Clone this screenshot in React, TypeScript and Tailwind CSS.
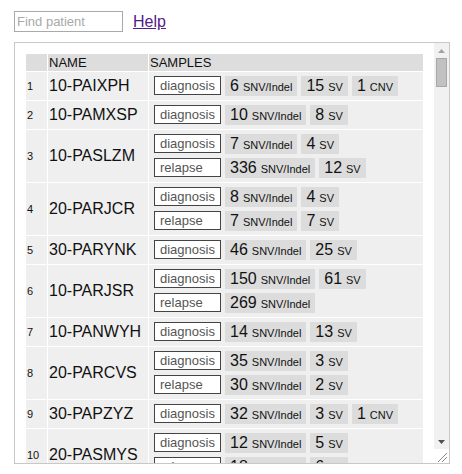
import React from "react";

type Count = { n: number; unit: string };
type Sample = { label: string; counts: Count[] };
type Patient = { name: string; samples: Sample[] };

const patients: Patient[] = [
  { name: "10-PAIXPH", samples: [{ label: "diagnosis", counts: [{ n: 6, unit: "SNV/Indel" }, { n: 15, unit: "SV" }, { n: 1, unit: "CNV" }] }] },
  { name: "10-PAMXSP", samples: [{ label: "diagnosis", counts: [{ n: 10, unit: "SNV/Indel" }, { n: 8, unit: "SV" }] }] },
  {
    name: "10-PASLZM",
    samples: [
      { label: "diagnosis", counts: [{ n: 7, unit: "SNV/Indel" }, { n: 4, unit: "SV" }] },
      { label: "relapse", counts: [{ n: 336, unit: "SNV/Indel" }, { n: 12, unit: "SV" }] },
    ],
  },
  {
    name: "20-PARJCR",
    samples: [
      { label: "diagnosis", counts: [{ n: 8, unit: "SNV/Indel" }, { n: 4, unit: "SV" }] },
      { label: "relapse", counts: [{ n: 7, unit: "SNV/Indel" }, { n: 7, unit: "SV" }] },
    ],
  },
  { name: "30-PARYNK", samples: [{ label: "diagnosis", counts: [{ n: 46, unit: "SNV/Indel" }, { n: 25, unit: "SV" }] }] },
  {
    name: "10-PARJSR",
    samples: [
      { label: "diagnosis", counts: [{ n: 150, unit: "SNV/Indel" }, { n: 61, unit: "SV" }] },
      { label: "relapse", counts: [{ n: 269, unit: "SNV/Indel" }] },
    ],
  },
  { name: "10-PANWYH", samples: [{ label: "diagnosis", counts: [{ n: 14, unit: "SNV/Indel" }, { n: 13, unit: "SV" }] }] },
  {
    name: "20-PARCVS",
    samples: [
      { label: "diagnosis", counts: [{ n: 35, unit: "SNV/Indel" }, { n: 3, unit: "SV" }] },
      { label: "relapse", counts: [{ n: 30, unit: "SNV/Indel" }, { n: 2, unit: "SV" }] },
    ],
  },
  { name: "30-PAPZYZ", samples: [{ label: "diagnosis", counts: [{ n: 32, unit: "SNV/Indel" }, { n: 3, unit: "SV" }, { n: 1, unit: "CNV" }] }] },
  {
    name: "20-PASMYS",
    samples: [
      { label: "diagnosis", counts: [{ n: 12, unit: "SNV/Indel" }, { n: 5, unit: "SV" }] },
      { label: "relapse", counts: [{ n: 18, unit: "SNV/Indel" }, { n: 6, unit: "SV" }] },
    ],
  },
];

// classic chrome-style scrollbar, drawn since the headless page hides the native one
function Scrollbar() {
  return (
    <div className="w-[15px] shrink-0 flex flex-col bg-[#f1f1f1]">
      <div className="h-[15px] flex items-center justify-center">
        <svg width="7" height="4" viewBox="0 0 7 4">
          <polygon points="0,4 7,4 3.5,0" fill="#a3a3a3" />
        </svg>
      </div>
      <div className="flex-1">
        <div className="mx-[2px] h-[29px] bg-[#c1c1c1] border border-[#a8a8a8]" />
      </div>
      <div className="h-[15px] flex items-center justify-center">
        <svg width="7" height="4" viewBox="0 0 7 4">
          <polygon points="0,0 7,0 3.5,4" fill="#505050" />
        </svg>
      </div>
      <div className="h-[14px] bg-white">
        <svg width="15" height="14" viewBox="0 0 15 14">
          <line x1="13" y1="4" x2="4" y2="13" stroke="#8a8a8a" strokeWidth="1" />
          <line x1="13" y1="8" x2="8" y2="13" stroke="#8a8a8a" strokeWidth="1" />
        </svg>
      </div>
    </div>
  );
}

export default function App() {
  return (
    <div className="pl-[14px] pt-[11px] text-[#111]" style={{ fontFamily: '"Liberation Sans", Arial, sans-serif' }}>
      <div className="flex items-center gap-[10px] h-[21px]">
        <input
          placeholder="Find patient"
          className="w-[109px] h-[21px] border border-[#a9a9a9] px-[2px] text-[13px] placeholder:text-[#a9a9a9] outline-none"
        />
        <a href="#" className="text-[16px] text-[#551a8b] underline leading-[18px]">
          Help
        </a>
      </div>

      <div className="mt-[10px] w-[436px] h-[422px] border border-[#c8c8c8] flex">
        <div className="flex-1 overflow-hidden p-[10px]">
          <table className="w-full border-separate border-spacing-[1px]">
            <thead>
              <tr className="bg-[#dddddd]">
                <th className="w-[21px]"></th>
                <th className="w-[100px] text-left font-normal text-[13px] leading-[15px] px-px py-px">NAME</th>
                <th className="text-left font-normal text-[13px] leading-[15px] px-px py-px">SAMPLES</th>
              </tr>
            </thead>
            <tbody>
              {patients.map((p, i) => (
                <tr key={i} className="bg-[#efefef]">
                  <td className="text-[11px] align-middle px-px">{i + 1}</td>
                  <td className="text-[16px] align-middle px-px">{p.name}</td>
                  <td className="px-px">
                    <div className="flex flex-col gap-[4px] py-[4px] pl-[4px]">
                      {p.samples.map((s) => (
                        <div key={s.label} className="flex items-start gap-1 h-[20px]">
                          <span className="w-[67px] h-[19px] border border-[#444] bg-white text-[13px] text-[#555] pl-[5px] leading-[17px]">
                            {s.label}
                          </span>
                          {s.counts.map((c) => (
                            <span key={c.unit} className="inline-flex items-baseline h-[20px] bg-[#dcdcdc] px-[5px]">
                              <span className="text-[16px] leading-[20px]">{c.n}</span>
                              <span className="text-[11px] ml-[4px]">{c.unit}</span>
                            </span>
                          ))}
                        </div>
                      ))}
                    </div>
                  </td>
                </tr>
              ))}
            </tbody>
          </table>
        </div>
        <Scrollbar />
      </div>
    </div>
  );
}
